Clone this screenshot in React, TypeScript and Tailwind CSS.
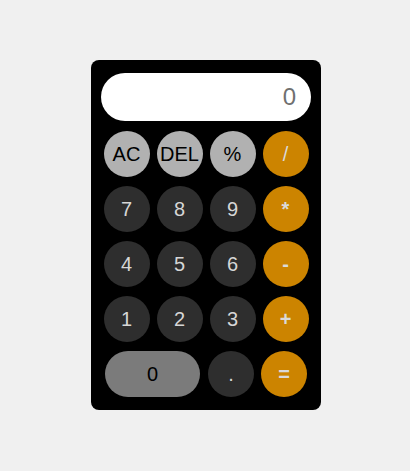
import { useState } from 'react'

type Kind = 'fn' | 'num' | 'op'

const styles: Record<Kind, string> = {
  fn: 'bg-[#b1b1b1] text-black',
  num: 'bg-[#2e2e2e] text-[#d6d6d6]',
  op: 'bg-[#cc8400] text-[#dadada]',
}

function Key({ label, kind, bold, onPress }: { label: string; kind: Kind; bold?: boolean; onPress: (k: string) => void }) {
  return (
    <button
      onClick={() => onPress(label)}
      className={`w-[46px] h-[46px] rounded-full flex items-center justify-center text-[20px] ${styles[kind]} ${bold ? 'font-bold' : ''}`}
    >
      {label}
    </button>
  )
}

const rows: [string, Kind][][] = [
  [['AC', 'fn'], ['DEL', 'fn'], ['%', 'fn'], ['/', 'op']],
  [['7', 'num'], ['8', 'num'], ['9', 'num'], ['*', 'op']],
  [['4', 'num'], ['5', 'num'], ['6', 'num'], ['-', 'op']],
  [['1', 'num'], ['2', 'num'], ['3', 'num'], ['+', 'op']],
]

export default function App() {
  const [value, setValue] = useState('0')

  function press(k: string) {
    if (k === 'AC') return setValue('0')
    if (k === 'DEL') return setValue(v => (v.length > 1 ? v.slice(0, -1) : '0'))
    if (k === '=') {
      try {
        // eslint-disable-next-line no-new-func
        const r = Function(`return (${value.replace(/%/g, '/100')})`)()
        setValue(String(r))
      } catch {
        setValue('Error')
      }
      return
    }
    setValue(v => (v === '0' && k !== '.' ? k : v + k))
  }

  return (
    <div className="min-h-[471px] bg-[#f0f0f0] flex justify-center pt-[60px] pl-[2px] font-['Liberation_Sans',Arial,sans-serif]">
      <div className="w-[230px] h-[350px] bg-black rounded-[8px] px-[10px] pt-[13px] flex flex-col">
        <div className="h-[48px] bg-white rounded-full flex items-center justify-end pr-[15px] text-[24px] text-[#707070]">
          {value}
        </div>
        <div className="flex flex-col gap-[9px] mt-[10px]">
          {rows.map((row, i) => (
            <div key={i} className="flex justify-center gap-[7px]">
              {row.map(([label, kind]) => (
                <Key key={label} label={label} kind={kind} bold={kind === 'op' && label !== '/'} onPress={press} />
              ))}
            </div>
          ))}
          <div className="flex justify-center gap-[7px]">
            <button
              onClick={() => press('0')}
              className="w-[95px] h-[46px] rounded-full bg-[#7b7b7b] text-black text-[20px] mr-px"
            >
              0
            </button>
            <Key label="." kind="num" onPress={press} />
            <Key label="=" kind="op" bold onPress={press} />
          </div>
        </div>
      </div>
    </div>
  )
}
